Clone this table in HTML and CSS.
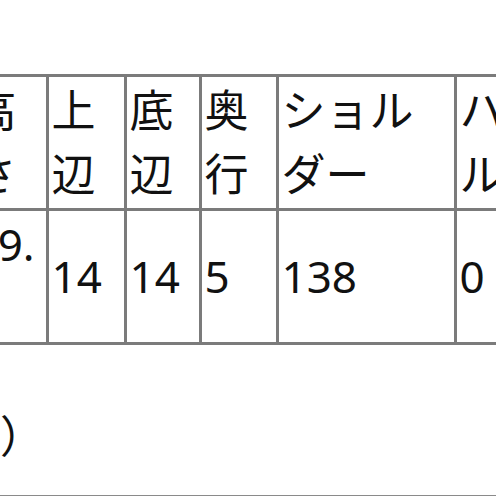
FILE: index.html
```html
<!DOCTYPE html>
<html lang="ja">
<head>
<meta charset="utf-8">
<title>サイズ</title>
<link rel="stylesheet" href="styles.css">
</head>
<body>
<div class="page">
  <table class="spec">
    <colgroup>
      <col class="c0">
      <col class="c1">
      <col class="c2">
      <col class="c3">
      <col class="c4">
      <col class="c5">
      <col class="c6">
    </colgroup>
    <tr>
      <th>サイズ</th>
      <th>高さ</th>
      <th>上辺</th>
      <th>底辺</th>
      <th>奥行</th>
      <th>ショルダー</th>
      <th>ハンドル</th>
    </tr>
    <tr>
      <td>M</td>
      <td>29.5</td>
      <td>14</td>
      <td>14</td>
      <td>5</td>
      <td>138</td>
      <td>0</td>
    </tr>
  </table>
  <p class="note">（単位はセンチ）</p>
  <div class="rule"></div>
</div>
</body>
</html>
```
FILE: styles.css
```css
html, body {
  margin: 0;
  padding: 0;
  background: #ffffff;
  overflow: hidden;
}

.page {
  margin-left: -308px;
  padding-top: 74px;
  font-family: "Noto Sans", "Noto Sans CJK JP", sans-serif;
  font-size: 44px;
  line-height: 64px;
  color: #111111;
  width: 1000px;
}

.spec {
  border-collapse: collapse;
  table-layout: fixed;
  width: 920px;
  border: 3px solid #7b7b7b;
}

.c0 { width: 275px; }
.c1 { width: 79px; }
.c2 { width: 78px; }
.c3 { width: 75px; }
.c4 { width: 77px; }
.c5 { width: 178px; }
.c6 { width: 158px; }

.spec th,
.spec td {
  border: 3px solid #7b7b7b;
  padding: 1px 2px 2px 2.5px;
  font-weight: normal;
  text-align: left;
  vertical-align: middle;
  word-break: break-all;
}

.note {
  margin: 59px 0 0 0;
}

.rule {
  margin-top: 27px;
  border-top: 3px solid #8a8a8a;
}
```
